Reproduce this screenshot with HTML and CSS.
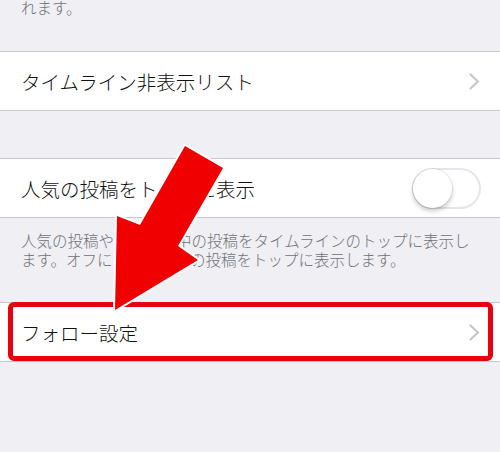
FILE: index.html
```html
<!DOCTYPE html>
<html lang="ja">
<head>
<meta charset="utf-8">
<link rel="stylesheet" href="styles.css">
</head>
<body>
<div class="page">
  <p class="note note-top">れます。</p>

  <div class="group group-first">
    <div class="row">
      <span class="label">タイムライン非表示リスト</span>
      <svg class="chevron" viewBox="0 0 11 17" width="11" height="17"><polyline points="1.5,1.5 9,8.5 1.5,15.5" /></svg>
    </div>
  </div>

  <div class="group group-second">
    <div class="row row-switch">
      <span class="label">人気の投稿をトップに表示</span>
      <span class="switch"></span>
    </div>
  </div>
  <p class="note note-desc">人気の投稿やフォロー中の投稿をタイムラインのトップに表示し<br>ます。オフにすると最新の投稿をトップに表示します。</p>

  <div class="group group-third">
    <div class="row">
      <span class="label">フォロー設定</span>
      <svg class="chevron" viewBox="0 0 11 17" width="11" height="17"><polyline points="1.5,1.5 9,8.5 1.5,15.5" /></svg>
    </div>
  </div>

  <svg class="arrow" viewBox="0 0 500 452" width="500" height="452">
    <polygon points="185,148 223,170 178,248 198,262 115,312 117,218 140,227" />
  </svg>
</div>
</body>
</html>
```

FILE: styles.css
```css
html, body {
  margin: 0;
  padding: 0;
  background: #efeff4;
}
body {
  font-family: "Noto Sans CJK JP", "Noto Sans", sans-serif;
  font-weight: 300;
  width: 500px;
  height: 452px;
  overflow: hidden;
}
.page {
  position: relative;
  width: 500px;
  height: 452px;
}
.note {
  margin: 0;
  padding: 0 21px;
  font-size: 15.5px;
  line-height: 19px;
  color: #717176;
  white-space: nowrap;
}
.note-top {
  margin-top: -2px;
  height: 20px;
}
.group {
  background: #fff;
  border-top: 1px solid #c8c7cc;
  border-bottom: 1px solid #c8c7cc;
}
.group-first {
  margin-top: 33px;
}
.group-second {
  margin-top: 47px;
}
.note-desc {
  padding-top: 13px;
}
.group-third {
  margin-top: 33px;
  position: relative;
}
.group-third::after {
  content: "";
  position: absolute;
  left: 8px;
  right: 7px;
  top: -1px;
  bottom: 0;
  border: 5px solid #e8000c;
  border-radius: 6px;
}
.row {
  height: 58px;
  display: flex;
  align-items: center;
  justify-content: space-between;
  padding: 0 20px 0 21px;
}
.row-switch {
  padding-right: 19px;
}
.label {
  font-size: 19.5px;
  color: #111;
  letter-spacing: 0;
}
.chevron polyline {
  fill: none;
  stroke: #c7c7cc;
  stroke-width: 2.3;
  stroke-linecap: round;
  stroke-linejoin: round;
}
.switch {
  position: relative;
  width: 69px;
  height: 41px;
  box-sizing: border-box;
  border: 2px solid #e5e5ea;
  border-radius: 21px;
  background: #fff;
}
.switch::after {
  content: "";
  position: absolute;
  left: -1px;
  top: -1px;
  width: 39px;
  height: 39px;
  border-radius: 50%;
  background: #fff;
  box-shadow: 0 3px 5px rgba(0, 0, 0, 0.22), 0 0 0 1px rgba(0, 0, 0, 0.06);
}
.arrow {
  position: absolute;
  left: 0;
  top: 0;
  pointer-events: none;
}
.arrow polygon {
  fill: #f00000;
  stroke: #fff;
  stroke-width: 4;
  stroke-linejoin: miter;
  paint-order: stroke;
}
```
